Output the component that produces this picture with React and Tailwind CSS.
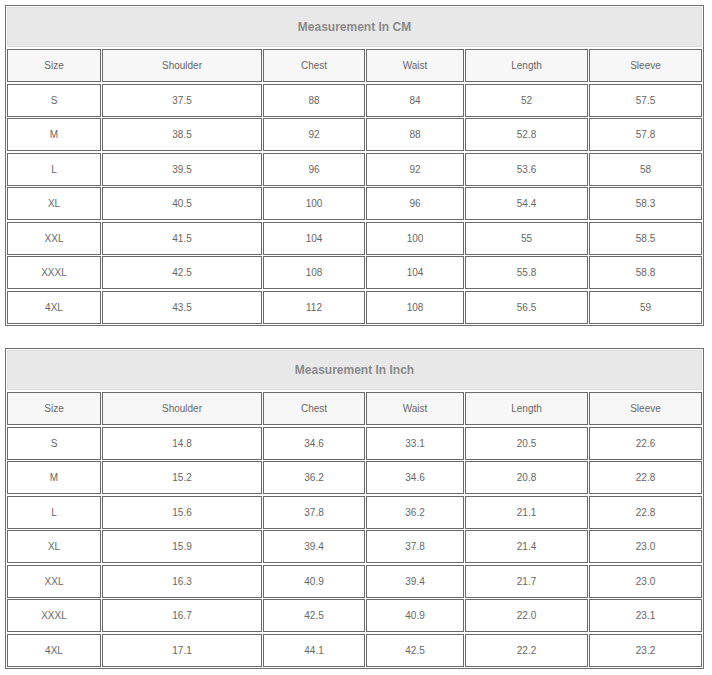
import React from "react";

const HEAD = ["Size", "Shoulder", "Chest", "Waist", "Length", "Sleeve"];

const CM = [
  ["S", "37.5", "88", "84", "52", "57.5"],
  ["M", "38.5", "92", "88", "52.8", "57.8"],
  ["L", "39.5", "96", "92", "53.6", "58"],
  ["XL", "40.5", "100", "96", "54.4", "58.3"],
  ["XXL", "41.5", "104", "100", "55", "58.5"],
  ["XXXL", "42.5", "108", "104", "55.8", "58.8"],
  ["4XL", "43.5", "112", "108", "56.5", "59"],
];

const INCH = [
  ["S", "14.8", "34.6", "33.1", "20.5", "22.6"],
  ["M", "15.2", "36.2", "34.6", "20.8", "22.8"],
  ["L", "15.6", "37.8", "36.2", "21.1", "22.8"],
  ["XL", "15.9", "39.4", "37.8", "21.4", "23.0"],
  ["XXL", "16.3", "40.9", "39.4", "21.7", "23.0"],
  ["XXXL", "16.7", "42.5", "40.9", "22.0", "23.1"],
  ["4XL", "17.1", "44.1", "42.5", "22.2", "23.2"],
];

function SizeTable({ title, rows }) {
  return (
    <div className="w-[699px] border border-[#6f6f6f] p-px bg-white">
      <div className="h-[40px] bg-[#e8e8e8] border border-[#dcdcdc] flex items-center justify-center text-[12px] font-bold text-[#8a8a8a]">
        {title}
      </div>
      <div className="mt-[2px] grid grid-cols-[94px_160px_102px_98px_123px_113px] gap-x-px gap-y-[1.57px] auto-rows-[33px]">
        {HEAD.map((h) => (
          <div
            key={h}
            className="border border-[#6a6a6a] bg-[#f7f7f7] flex items-center justify-center text-[10px] text-[#666]"
          >
            {h}
          </div>
        ))}
        {rows.map((r) =>
          r.map((v, i) => (
            <div
              key={r[0] + i}
              className="border border-[#6a6a6a] bg-white flex items-center justify-center text-[10px] text-[#666]"
            >
              {v}
            </div>
          ))
        )}
      </div>
    </div>
  );
}

export default function App() {
  return (
    <div className="w-[712px] h-[675px] bg-white pt-[5px] pl-[5px] font-['Liberation_Sans',Arial,sans-serif]">
      <SizeTable title="Measurement In CM" rows={CM} />
      <div className="mt-[22px]">
        <SizeTable title="Measurement In Inch" rows={INCH} />
      </div>
    </div>
  );
}
